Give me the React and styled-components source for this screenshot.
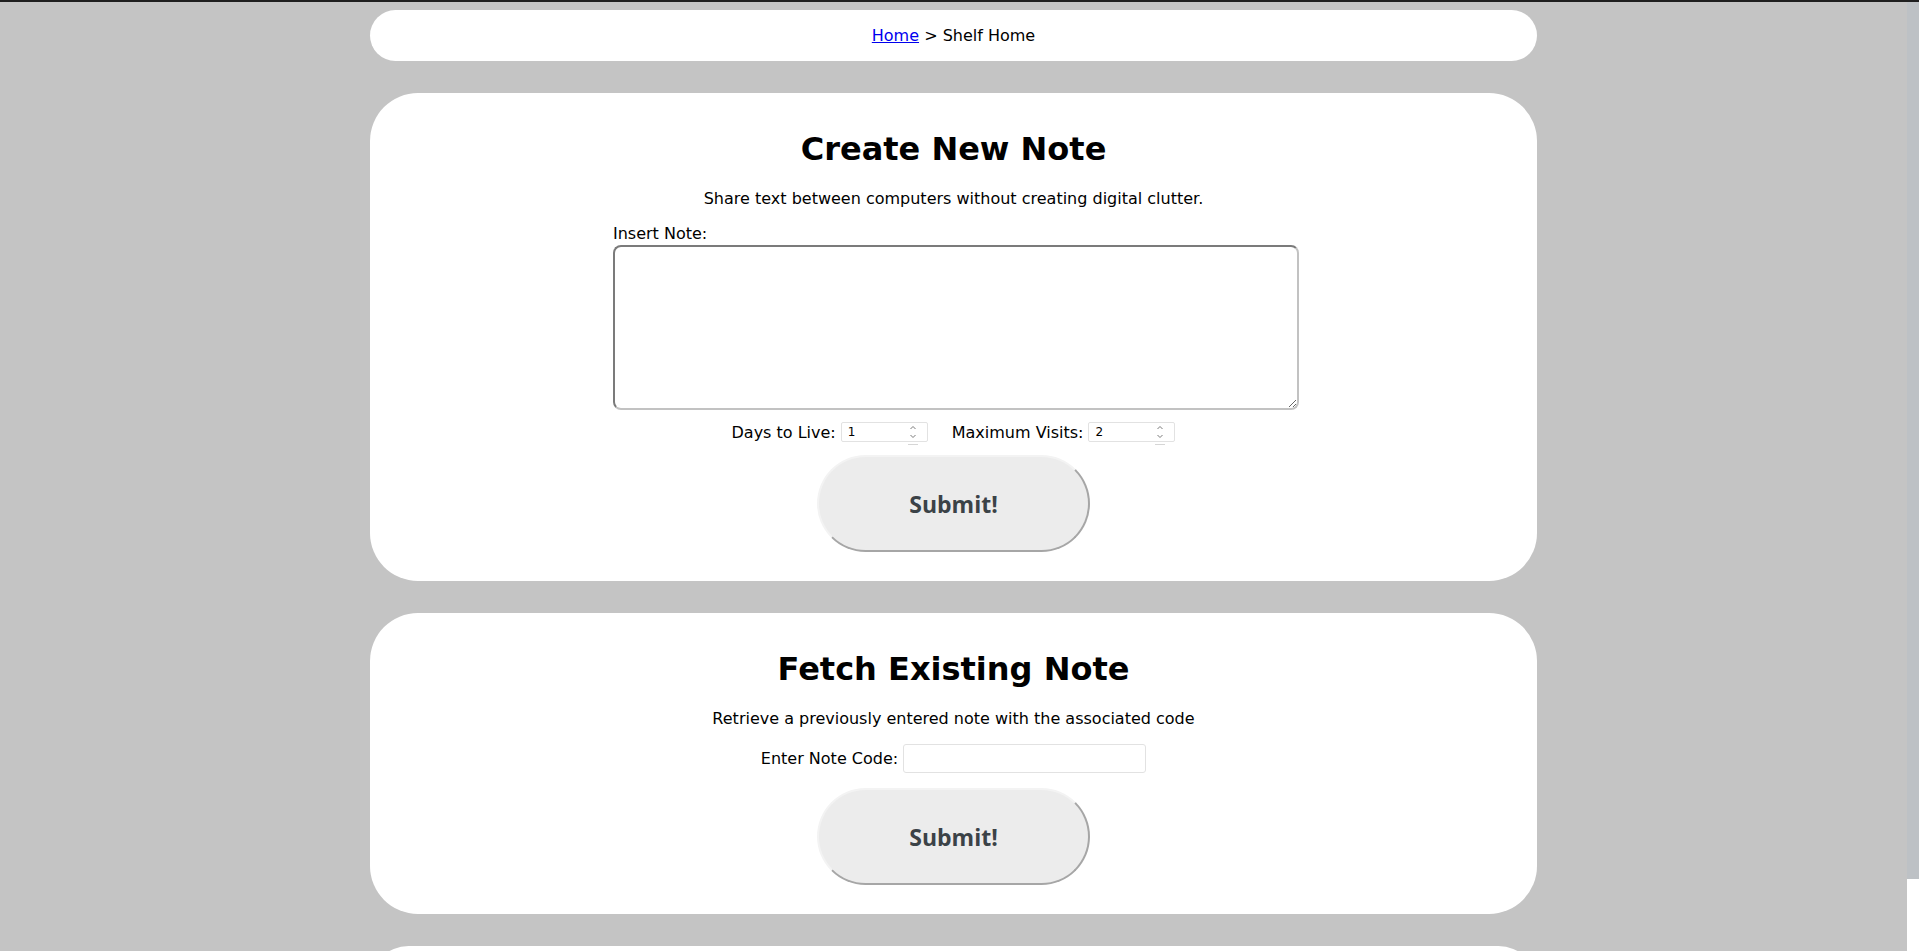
import React from "react";
import styled, { createGlobalStyle } from "styled-components";

const GlobalStyle = createGlobalStyle`
  html, body {
    margin: 0;
    padding: 0;
    height: 100%;
    overflow: hidden;
    background: #c4c4c4;
  }
  #root { height: 100%; }
`;

const Frame = styled.div`
  height: 100vh;
  display: flex;
  flex-direction: column;
  font-family: "DejaVu Sans", "Liberation Sans", sans-serif;
  color: #000;
`;

const TopLine = styled.div`
  flex: 0 0 2px;
  background: #1f1f1f;
`;

const Body = styled.div`
  flex: 1 1 auto;
  min-height: 0;
  display: flex;
`;

const Viewport = styled.div`
  flex: 1 1 auto;
  overflow: hidden;
  background: #c4c4c4;
`;

const ScrollRail = styled.div`
  flex: 0 0 12px;
  background: #ffffff;
  display: flex;
  flex-direction: column;
`;

const ScrollThumb = styled.div`
  height: 877px;
  background: #bdc1c5;
`;

const Page = styled.main`
  display: flex;
  flex-direction: column;
  align-items: center;
  gap: 32px;
  padding: 8px 0;
`;

const Crumbs = styled.nav`
  width: 1167px;
  box-sizing: border-box;
  background: #fff;
  border-radius: 26px;
  padding: 16px 0;
  font-size: 16px;
  line-height: 19px;
  text-align: center;
  white-space: pre;
`;

const CrumbLink = styled.a`
  color: #0000ee;
  text-decoration: underline;
`;

const Card = styled.section`
  width: 1167px;
  box-sizing: border-box;
  background: #fff;
  border-radius: 48px;
  padding: 17px 0 ${(p) => p.$bottom || 28}px;
  min-height: ${(p) => p.$minHeight || 0}px;
  display: flex;
  flex-direction: column;
  align-items: center;
`;

const Title = styled.h1`
  margin: 21px 0 21px;
  font-size: 32px;
  line-height: 37px;
  font-weight: bold;
  font-family: "DejaVu Sans", sans-serif;
`;

const Lead = styled.p`
  margin: 0 0 16px;
  font-size: 16px;
  line-height: 19px;
`;

const NoteBlock = styled.div`
  width: 686px;
  margin-left: 5px;
  display: flex;
  flex-direction: column;
  gap: 2px;
`;

const FieldLabel = styled.label`
  font-size: 16px;
  line-height: 19px;
`;

const NoteArea = styled.textarea`
  width: 686px;
  height: 165px;
  box-sizing: border-box;
  border-style: solid;
  border-width: 2px;
  border-color: #7b7b7b #c2c2c2 #c2c2c2 #7b7b7b;
  border-radius: 8px;
  background: #fff;
  resize: both;
  outline: none;
  font-family: "DejaVu Sans Mono", monospace;
  font-size: 13px;
`;

const OptionRow = styled.div`
  margin-top: ${(p) => p.$top || 0}px;
  min-height: 22px;
  display: flex;
  align-items: center;
  gap: ${(p) => p.$gap || 0}px;
  font-size: 16px;
  line-height: 19px;
`;

const Option = styled.label`
  display: flex;
  align-items: center;
  gap: 5px;
`;

const SpinField = styled.span`
  position: relative;
  display: inline-flex;
`;

const NumberBox = styled.input`
  width: 87px;
  height: 20px;
  box-sizing: border-box;
  border: 1px solid #e2e2e2;
  border-radius: 2px;
  padding: 0 20px 0 6px;
  font-family: "DejaVu Sans", sans-serif;
  font-size: 12px;
  color: #000;
  background: #fff;
  outline: none;
  appearance: textfield;
  -moz-appearance: textfield;
  &::-webkit-inner-spin-button,
  &::-webkit-outer-spin-button {
    -webkit-appearance: none;
    margin: 0;
  }
`;

const Spinner = styled.svg`
  position: absolute;
  right: 9px;
  top: 1px;
  width: 12px;
  height: 22px;
  pointer-events: none;
`;

const CodeBox = styled.input`
  width: 243px;
  height: 29px;
  box-sizing: border-box;
  border: 1px solid #e2e2e2;
  border-radius: 3px;
  padding: 0 6px;
  font-family: "DejaVu Sans", sans-serif;
  font-size: 13px;
  background: #fff;
  outline: none;
`;

const SubmitButton = styled.button`
  margin-top: ${(p) => p.$top || 0}px;
  width: 273px;
  height: 97px;
  box-sizing: border-box;
  border-radius: 49px;
  border-style: solid;
  border-width: 2px;
  border-color: #f3f3f3 #a6a6a6 #a6a6a6 #f3f3f3;
  background: #ececec;
  color: #3b4247;
  font-family: "Open Sans", "Noto Sans", sans-serif;
  font-weight: 700;
  font-size: 23px;
  cursor: pointer;
`;

function NumberField({ value }) {
  return (
    <SpinField>
      <NumberBox type="number" defaultValue={value} min={1} />
      <Spinner viewBox="0 0 12 22">
        <path d="M3.5 6 L6 3.5 L8.5 6" fill="none" stroke="#6b6b6b" strokeWidth="0.9" />
        <path d="M3.5 12 L6 14.5 L8.5 12" fill="none" stroke="#6b6b6b" strokeWidth="0.9" />
        <path d="M1 21.5 H11" stroke="#d6d6d6" strokeWidth="1" />
      </Spinner>
    </SpinField>
  );
}

export default function App() {
  return (
    <>
      <GlobalStyle />
      <Frame>
        <TopLine />
        <Body>
          <Viewport>
            <Page>
              <Crumbs>
                <CrumbLink href="#">Home</CrumbLink>
                {" > Shelf Home"}
              </Crumbs>

              <Card $bottom={29}>
                <Title>Create New Note</Title>
                <Lead>Share text between computers without creating digital clutter.</Lead>
                <NoteBlock>
                  <FieldLabel htmlFor="note">Insert Note:</FieldLabel>
                  <NoteArea id="note" />
                </NoteBlock>
                <OptionRow $top={11} $gap={24}>
                  <Option>
                    Days to Live:
                    <NumberField value={1} />
                  </Option>
                  <Option>
                    Maximum Visits:
                    <NumberField value={2} />
                  </Option>
                </OptionRow>
                <SubmitButton $top={12}>Submit!</SubmitButton>
              </Card>

              <Card $bottom={29}>
                <Title>Fetch Existing Note</Title>
                <Lead>Retrieve a previously entered note with the associated code</Lead>
                <OptionRow>
                  <Option>
                    Enter Note Code:
                    <CodeBox type="text" />
                  </Option>
                </OptionRow>
                <SubmitButton $top={15}>Submit!</SubmitButton>
              </Card>

              <Card $minHeight={77} />
            </Page>
          </Viewport>
          <ScrollRail>
            <ScrollThumb />
          </ScrollRail>
        </Body>
      </Frame>
    </>
  );
}
